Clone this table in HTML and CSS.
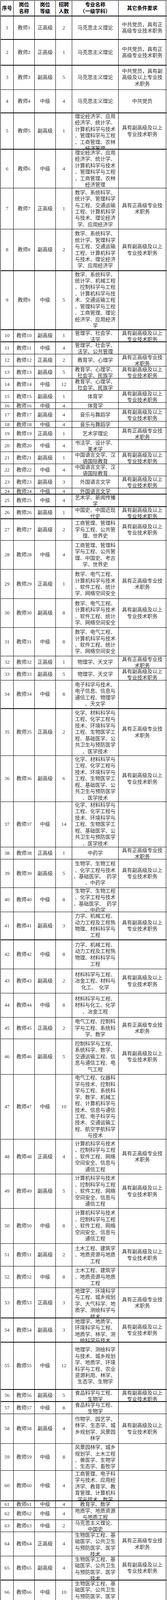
FILE: index.html
```html
<!DOCTYPE html>
<html lang="zh-CN">
<head>
<meta charset="utf-8">
<meta name="viewport" content="width=device-width, initial-scale=1">
<title>岗位表</title>
<link rel="stylesheet" href="styles.css">
</head>
<body>
<div class="sheet">
<div class="row head h40 thick"><div class="c">序号</div><div class="c"><span>岗位<br>名称</span></div><div class="c"><span>岗位<br>等级</span></div><div class="c"><span>招聘<br>人数</span></div><div class="c"><span>专业名称<br>（一级学科）</span></div><div class="c">其它条件要求</div></div>
<div class="row h60 thick"><div class="c">1</div><div class="c">教师1</div><div class="c">正高级</div><div class="c">2</div><div class="c">马克思主义理论</div><div class="c"><span>中共党员，具有正<br>高级专业技术职务</span></div></div>
<div class="row h66 thick"><div class="c">2</div><div class="c">教师2</div><div class="c">正高级</div><div class="c">1</div><div class="c">马克思主义理论</div><div class="c"><span>中共党员，具有正<br>高级专业技术职务</span></div></div>
<div class="row h62"><div class="c">3</div><div class="c">教师3</div><div class="c">副高级</div><div class="c">5</div><div class="c">马克思主义理论</div><div class="c"><span>中共党员，具有副<br>高级及以上专业技<br>术职务</span></div></div>
<div class="row h60 thick"><div class="c">4</div><div class="c">教师4</div><div class="c">中级</div><div class="c">4</div><div class="c">马克思主义理论</div><div class="c">中共党员</div></div>
<div class="row h93 thick"><div class="c">5</div><div class="c">教师5</div><div class="c">副高级</div><div class="c">1</div><div class="c"><span>理论经济学、应用<br>经济学、统计学、<br>计算机科学与技术<br>、管理科学与工程<br>、工商管理、农林<br>经济管理</span></div><div class="c"><span>具有副高级及以上<br>专业技术职务</span></div></div>
<div class="row h99"><div class="c">6</div><div class="c">教师6</div><div class="c">中级</div><div class="c">4</div><div class="c"><span>理论经济学、应用<br>经济学、统计学、<br>计算机科学与技术<br>、管理科学与工程<br>、工商管理、农林<br>经济管理</span></div><div class="c"></div></div>
<div class="row h105"><div class="c">7</div><div class="c">教师7</div><div class="c">正高级</div><div class="c">1</div><div class="c"><span>数学、系统科学、<br>统计学、管理科学<br>与工程、交通运输<br>工程、计算机科学<br>与技术、理论经济<br>学、应用经济学</span></div><div class="c"><span>具有正高级专业技<br>术职务</span></div></div>
<div class="row h107 thick"><div class="c">8</div><div class="c">教师8</div><div class="c">副高级</div><div class="c">2</div><div class="c"><span>数学、系统科学、<br>统计学、管理科学<br>与工程、交通运输<br>工程、计算机科学<br>与技术、理论经济<br>学、应用经济学</span></div><div class="c"><span>具有副高级及以上<br>专业技术职务</span></div></div>
<div class="row h151 thick"><div class="c">9</div><div class="c">教师9</div><div class="c">中级</div><div class="c">5</div><div class="c"><span>数学、系统科学、<br>统计学、机械工程<br>、控制科学与工程<br>、计算机科学与技<br>术、交通运输工程<br>、管理科学与工程<br>、工商管理、理论<br>经济学、应用经济<br>学</span></div><div class="c"></div></div>
<div class="row h31 thick"><div class="c">10</div><div class="c">教师10</div><div class="c">副高级</div><div class="c">1</div><div class="c"><span>管理学、社会学、<br>法学</span></div><div class="c"><span>具有副高级及以上<br>专业技术职务</span></div></div>
<div class="row h31"><div class="c">11</div><div class="c">教师11</div><div class="c">中级</div><div class="c">4</div><div class="c"><span>管理学、社会学、<br>法学、公共管理</span></div><div class="c"></div></div>
<div class="row h31"><div class="c">12</div><div class="c">教师12</div><div class="c">正高级</div><div class="c">2</div><div class="c">教育学、心理学</div><div class="c"><span>具有正高级专业技<br>术职务</span></div></div>
<div class="row h31"><div class="c">13</div><div class="c">教师13</div><div class="c">副高级</div><div class="c">5</div><div class="c"><span>教育学、心理学、<br>社会学、民族学</span></div><div class="c"><span>具有副高级及以上<br>专业技术职务</span></div></div>
<div class="row h31"><div class="c">14</div><div class="c">教师14</div><div class="c">中级</div><div class="c">12</div><div class="c"><span>教育学、心理学、<br>社会学、民族学</span></div><div class="c"></div></div>
<div class="row h31"><div class="c">15</div><div class="c">教师15</div><div class="c">副高级</div><div class="c">1</div><div class="c">体育学</div><div class="c"><span>具有副高级及以上<br>专业技术职务</span></div></div>
<div class="row h16"><div class="c">16</div><div class="c">教师16</div><div class="c">中级</div><div class="c">4</div><div class="c">体育学</div><div class="c"></div></div>
<div class="row h32"><div class="c">17</div><div class="c">教师17</div><div class="c">副高级</div><div class="c">4</div><div class="c">音乐与舞蹈学</div><div class="c"><span>具有副高级及以上<br>专业技术职务</span></div></div>
<div class="row h16"><div class="c">18</div><div class="c">教师18</div><div class="c">中级</div><div class="c">4</div><div class="c">音乐与舞蹈学</div><div class="c"></div></div>
<div class="row h31"><div class="c">19</div><div class="c">教师19</div><div class="c">正高级</div><div class="c">1</div><div class="c">艺术学理论</div><div class="c"><span>具有正高级专业技<br>术职务</span></div></div>
<div class="row h31"><div class="c">20</div><div class="c">教师20</div><div class="c">中级</div><div class="c">4</div><div class="c"><span>书法学、设计学、<br>美术学</span></div><div class="c"></div></div>
<div class="row h31"><div class="c">21</div><div class="c">教师21</div><div class="c">副高级</div><div class="c">1</div><div class="c"><span>中国语言文学、汉<br>语国际教育</span></div><div class="c"><span>具有副高级及以上<br>专业技术职务</span></div></div>
<div class="row h31"><div class="c">22</div><div class="c">教师22</div><div class="c">中级</div><div class="c">4</div><div class="c"><span>中国语言文学、汉<br>语国际教育</span></div><div class="c"></div></div>
<div class="row h31"><div class="c">23</div><div class="c">教师23</div><div class="c">副高级</div><div class="c">3</div><div class="c">外国语言文学</div><div class="c"><span>具有副高级及以上<br>专业技术职务</span></div></div>
<div class="row h16 thick"><div class="c">24</div><div class="c">教师24</div><div class="c">中级</div><div class="c">4</div><div class="c">外国语言文学</div><div class="c"></div></div>
<div class="row h32 thick"><div class="c">25</div><div class="c">教师25</div><div class="c">中级</div><div class="c">4</div><div class="c"><span>艺术学、新闻传播<br>学</span></div><div class="c"></div></div>
<div class="row h31 thick"><div class="c">26</div><div class="c">教师26</div><div class="c">副高级</div><div class="c">1</div><div class="c"><span>中国史、中国近现<br>代史</span></div><div class="c"><span>具有副高级及以上<br>专业技术职务</span></div></div>
<div class="row h55"><div class="c">27</div><div class="c">教师27</div><div class="c">副高级</div><div class="c">2</div><div class="c"><span>工商管理、管理科<br>学与工程、公共管<br>理、世界史</span></div><div class="c"><span>具有副高级及以上<br>专业技术职务</span></div></div>
<div class="row h74"><div class="c">28</div><div class="c">教师28</div><div class="c">中级</div><div class="c">4</div><div class="c"><span>工商管理、管理科<br>学与工程、公共管<br>理、中国史、考古<br>学、世界史</span></div><div class="c"></div></div>
<div class="row h75"><div class="c">29</div><div class="c">教师29</div><div class="c">正高级</div><div class="c">1</div><div class="c"><span>数学、电气工程、<br>计算机科学与技术<br>、软件工程、统计<br>学、网络空间安全</span></div><div class="c"><span>具有正高级专业技<br>术职务</span></div></div>
<div class="row h74"><div class="c">30</div><div class="c">教师30</div><div class="c">副高级</div><div class="c">8</div><div class="c"><span>数学、电气工程、<br>计算机科学与技术<br>、软件工程、统计<br>学、网络空间安全</span></div><div class="c"><span>具有副高级及以上<br>专业技术职务</span></div></div>
<div class="row h73"><div class="c">31</div><div class="c">教师31</div><div class="c">中级</div><div class="c">8</div><div class="c"><span>数学、电气工程、<br>计算机科学与技术<br>、软件工程、统计<br>学、网络空间安全</span></div><div class="c"></div></div>
<div class="row h31"><div class="c">32</div><div class="c">教师32</div><div class="c">正高级</div><div class="c">1</div><div class="c">物理学、天文学</div><div class="c"><span>具有正高级专业技<br>术职务</span></div></div>
<div class="row h31"><div class="c">33</div><div class="c">教师33</div><div class="c">副高级</div><div class="c">5</div><div class="c">物理学、天文学</div><div class="c"><span>具有副高级及以上<br>专业技术职务</span></div></div>
<div class="row h73 thick"><div class="c">34</div><div class="c">教师34</div><div class="c">中级</div><div class="c">8</div><div class="c"><span>电子科学与技术、<br>电子信息、信息与<br>通信工程、物理学<br>、天文学</span></div><div class="c"></div></div>
<div class="row h120"><div class="c">35</div><div class="c">教师35</div><div class="c">正高级</div><div class="c">2</div><div class="c"><span>化学、材料科学与<br>工程、化学工程与<br>技术、环境科学与<br>工程、生物医学工<br>程、基础医学、公<br>共卫生与预防医学<br>、医学技术</span></div><div class="c"><span>具有正高级专业技<br>术职务</span></div></div>
<div class="row h118"><div class="c">36</div><div class="c">教师36</div><div class="c">副高级</div><div class="c">6</div><div class="c"><span>化学、材料科学与<br>工程、化学工程与<br>技术、环境科学与<br>工程、生物医学工<br>程、基础医学、公<br>共卫生与预防医学<br>、医学技术</span></div><div class="c"><span>具有副高级及以上<br>专业技术职务</span></div></div>
<div class="row h116"><div class="c">37</div><div class="c">教师37</div><div class="c">中级</div><div class="c">14</div><div class="c"><span>化学、材料科学与<br>工程、化学工程与<br>技术、环境科学与<br>工程、生物医学工<br>程、基础医学、公<br>共卫生与预防医学<br>、医学技术</span></div><div class="c"></div></div>
<div class="row h31"><div class="c">38</div><div class="c">教师38</div><div class="c">正高级</div><div class="c">1</div><div class="c">中药学</div><div class="c"><span>具有正高级专业技<br>术职务</span></div></div>
<div class="row h73"><div class="c">39</div><div class="c">教师39</div><div class="c">副高级</div><div class="c">5</div><div class="c"><span>生物学、生物工程<br>、化学工程与技术<br>、基础医学、&ensp;药学<br>、中药学</span></div><div class="c"><span>具有副高级及以上<br>专业技术职务</span></div></div>
<div class="row h62"><div class="c">40</div><div class="c">教师40</div><div class="c">中级</div><div class="c">8</div><div class="c"><span>生物学、生物工程<br>、化学工程与技术<br>、基础医学、&ensp;药学<br>、中药学</span></div><div class="c"></div></div>
<div class="row h72 thick"><div class="c">41</div><div class="c">教师41</div><div class="c">副高级</div><div class="c">3</div><div class="c"><span>力学、机械工程、<br>动力工程及工程热<br>物理、材料科学与<br>工程</span></div><div class="c"><span>具有副高级及以上<br>专业技术职务</span></div></div>
<div class="row h74"><div class="c">42</div><div class="c">教师42</div><div class="c">中级</div><div class="c">8</div><div class="c"><span>力学、机械工程、<br>动力工程及工程热<br>物理、材料科学与<br>工程</span></div><div class="c"></div></div>
<div class="row h62"><div class="c">43</div><div class="c">教师43</div><div class="c">副高级</div><div class="c">2</div><div class="c"><span>材料科学与工程、<br>冶金工程、材料与<br>化工、&ensp;化学</span></div><div class="c"><span>具有副高级及以上<br>专业技术职务</span></div></div>
<div class="row h62"><div class="c">44</div><div class="c">教师44</div><div class="c">中级</div><div class="c">8</div><div class="c"><span>材料科学与工程、<br>材料与化工、化学<br>、冶金工程</span></div><div class="c"></div></div>
<div class="row h55"><div class="c">45</div><div class="c">教师45</div><div class="c">正高级</div><div class="c">2</div><div class="c"><span>电气工程、控制科<br>学与工程、系统科<br>学、数学</span></div><div class="c"><span>具有正高级专业技<br>术职务</span></div></div>
<div class="row h91"><div class="c">46</div><div class="c">教师46</div><div class="c">副高级</div><div class="c">5</div><div class="c"><span>控制科学与工程、<br>系统科学、数学、<br>交通运输工程、信<br>息与通信工程、电<br>气工程</span></div><div class="c"><span>具有副高级及以上<br>专业技术职务</span></div></div>
<div class="row h166"><div class="c">47</div><div class="c">教师47</div><div class="c">中级</div><div class="c">10</div><div class="c"><span>电气工程、仪器科<br>学与技术、控制科<br>学与工程、系统科<br>学、数学、机械工<br>程、计算机科学与<br>技术、信息与通信<br>工程、电子科学与<br>技术、交通运输工<br>程、航空宇航科学<br>与技术</span></div><div class="c"></div></div>
<div class="row h89"><div class="c">48</div><div class="c">教师48</div><div class="c">正高级</div><div class="c">4</div><div class="c"><span>计算机科学与技术<br>、控制科学与工程<br>、软件工程、网络<br>空间安全、信息与<br>通信工程</span></div><div class="c"><span>具有正高级专业技<br>术职务</span></div></div>
<div class="row h88"><div class="c">49</div><div class="c">教师49</div><div class="c">副高级</div><div class="c">5</div><div class="c"><span>计算机科学与技术<br>、控制科学与工程<br>、软件工程、网络<br>空间安全、信息与<br>通信工程</span></div><div class="c"><span>具有副高级及以上<br>专业技术职务</span></div></div>
<div class="row h90"><div class="c">50</div><div class="c">教师50</div><div class="c">中级</div><div class="c">8</div><div class="c"><span>计算机科学与技术<br>、控制科学与工程<br>、软件工程、网络<br>空间安全、信息与<br>通信工程</span></div><div class="c"></div></div>
<div class="row h58"><div class="c">51</div><div class="c">教师51</div><div class="c">副高级</div><div class="c">2</div><div class="c"><span>土木工程、建筑学<br>、地质资源与地质<br>工程</span></div><div class="c"><span>具有副高级及以上<br>专业技术职务</span></div></div>
<div class="row h55"><div class="c">52</div><div class="c">教师52</div><div class="c">中级</div><div class="c">8</div><div class="c"><span>土木工程、建筑学<br>、地质资源与地质<br>工程</span></div><div class="c"></div></div>
<div class="row h78 thick"><div class="c">53</div><div class="c">教师53</div><div class="c">正高级</div><div class="c">3</div><div class="c"><span>地理学、环境科学<br>与工程、城乡规划<br>学、大气科学、地<br>质学、测绘科学与<br>技术</span></div><div class="c"><span>具有正高级专业技<br>术职务</span></div></div>
<div class="row h62 thick"><div class="c">54</div><div class="c">教师54</div><div class="c">副高级</div><div class="c">3</div><div class="c"><span>地理学、地质学、<br>环境科学与工程、<br>地质学、林学、测<br>绘科学与技术</span></div><div class="c"><span>具有副高级及以上<br>专业技术职务</span></div></div>
<div class="row h121 thick"><div class="c">55</div><div class="c">教师55</div><div class="c">中级</div><div class="c">12</div><div class="c"><span>地理学、测绘科学<br>与技术、城乡规划<br>学、地质学、环境<br>科学与工程、农业<br>资源利用、林学、<br>生态学、生物学</span></div><div class="c"></div></div>
<div class="row h31 thick"><div class="c">56</div><div class="c">教师56</div><div class="c">副高级</div><div class="c">5</div><div class="c"><span>食品科学与工程、<br>生物学</span></div><div class="c"><span>具有副高级及以上<br>专业技术职务</span></div></div>
<div class="row h31"><div class="c">57</div><div class="c">教师57</div><div class="c">中级</div><div class="c">8</div><div class="c"><span>食品科学与工程、<br>生物学</span></div><div class="c"></div></div>
<div class="row h76"><div class="c">58</div><div class="c">教师58</div><div class="c">副高级</div><div class="c">4</div><div class="c"><span>作物学、园艺学、<br>林学、生态学、城<br>乡规划学、风景园<br>林学</span></div><div class="c"><span>具有副高级及以上<br>专业技术职务</span></div></div>
<div class="row h69"><div class="c">59</div><div class="c">教师59</div><div class="c">中级</div><div class="c">8</div><div class="c"><span>风景园林学、城乡<br>规划学、土木工程<br>、兽医学、生物学<br>、生态学、畜牧学</span></div><div class="c"></div></div>
<div class="row h78 thick"><div class="c">60</div><div class="c">教师60</div><div class="c">中级</div><div class="c">4</div><div class="c"><span>工商管理、电子科<br>学与技术、应用经<br>济学、教育学、教<br>育管理、计算机科<br>学与技术、数学</span></div><div class="c"></div></div>
<div class="row h17"><div class="c">61</div><div class="c">教师61</div><div class="c">中级</div><div class="c">4</div><div class="c">教育学、数学</div><div class="c"></div></div>
<div class="row h31"><div class="c">62</div><div class="c">教师62</div><div class="c">中级</div><div class="c">4</div><div class="c"><span>地质学、地质资源<br>与地质工程</span></div><div class="c"></div></div>
<div class="row h31"><div class="c">63</div><div class="c">教师63</div><div class="c">中级</div><div class="c">2</div><div class="c"><span>马克思主义理论、<br>中国史</span></div><div class="c"></div></div>
<div class="row h62"><div class="c">64</div><div class="c">教师64</div><div class="c">正高级</div><div class="c">4</div><div class="c"><span>生物医学工程、基<br>础医学、公共卫生<br>与预防医学、医学<br>技术</span></div><div class="c"><span>具有正高级专业技<br>术职务</span></div></div>
<div class="row h62 thick"><div class="c">65</div><div class="c">教师65</div><div class="c">副高级</div><div class="c">4</div><div class="c"><span>生物医学工程、基<br>础医学、公共卫生<br>与预防医学、医学<br>技术</span></div><div class="c"><span>具有副高级及以上<br>专业技术职务</span></div></div>
<div class="row h62 thick"><div class="c">66</div><div class="c">教师66</div><div class="c">中级</div><div class="c">10</div><div class="c"><span>生物医学工程、基<br>础医学、公共卫生<br>与预防医学、医学<br>技术、生物学</span></div><div class="c"></div></div>
<div class="row h16"><div class="c">67</div><div class="c">教师67</div><div class="c">中级</div><div class="c">6</div><div class="c">临床医学、中医学</div><div class="c"></div></div>
<div class="row h17 thick"><div class="c">68</div><div class="c">教师68</div><div class="c">中级</div><div class="c">6</div><div class="c">兽医学</div><div class="c"></div></div>
<div class="row h31 thick"><div class="c">69</div><div class="c">教辅1</div><div class="c">副高级</div><div class="c">1</div><div class="c">专业不限</div><div class="c"><span>具有副高级及以上<br>专业技术职务</span></div></div>
<div class="row h93 thick"><div class="c">70</div><div class="c">教辅2</div><div class="c">中级</div><div class="c">1</div><div class="c"><span>图书馆学、情报学<br>、档案学、历史文<br>献学、中国古典文<br>献学、出版发行学<br>、信息资源管理、<br>数据科学</span></div><div class="c"></div></div>
<div class="row h46"><div class="c">71</div><div class="c">辅导员</div><div class="c">中级</div><div class="c">10</div><div class="c">专业不限</div><div class="c"><span>中共党员，本科阶<br>段以来曾担任过学<br>生干部</span></div></div>
</div>
</body>
</html>
```

FILE: styles.css
```css
html, body {
  margin: 0;
  padding: 0;
  background: #ffffff;
}

.sheet {
  margin: 1px 0 0 1px;
  width: 425px;
  border-top: 1px solid #000;
  border-left: 1px solid #000;
  font-family: "Liberation Serif", "Noto Sans CJK SC", serif;
  font-size: 13px;
  line-height: 16.4px;
  color: #333333;
}

.row {
  display: grid;
  grid-template-columns: 33px 54px 54px 42px 119px 122px;
  grid-template-rows: minmax(0, 1fr);
  box-sizing: border-box;
  border-bottom: 1px solid #000;
  overflow: hidden;
}

.row.thick {
  border-bottom-width: 2px;
}

.c {
  border-right: 1px solid #000;
  display: flex;
  flex-direction: column;
  justify-content: center;
  justify-content: safe center;
  align-items: center;
  text-align: center;
  white-space: nowrap;
  overflow: hidden;
  min-height: 0;
  min-width: 0;
}

.c span {
  display: block;
  text-align: center;
}

.head {
  color: #000;
  font-weight: bold;
  line-height: 16.7px;
}

.h16 { height: 16px; }
.h17 { height: 17px; }
.h31 { height: 31px; }
.h32 { height: 32px; }
.h40 { height: 40px; }
.h46 { height: 46px; }
.h55 { height: 55px; }
.h58 { height: 58px; }
.h60 { height: 60px; }
.h62 { height: 62px; }
.h66 { height: 66px; }
.h69 { height: 69px; }
.h72 { height: 72px; }
.h73 { height: 73px; }
.h74 { height: 74px; }
.h75 { height: 75px; }
.h76 { height: 76px; }
.h78 { height: 78px; }
.h88 { height: 88px; }
.h89 { height: 89px; }
.h90 { height: 90px; }
.h91 { height: 91px; }
.h93 { height: 93px; }
.h99 { height: 99px; }
.h105 { height: 105px; }
.h107 { height: 107px; }
.h116 { height: 116px; }
.h118 { height: 118px; }
.h120 { height: 120px; }
.h121 { height: 121px; }
.h151 { height: 151px; }
.h166 { height: 166px; }
```
